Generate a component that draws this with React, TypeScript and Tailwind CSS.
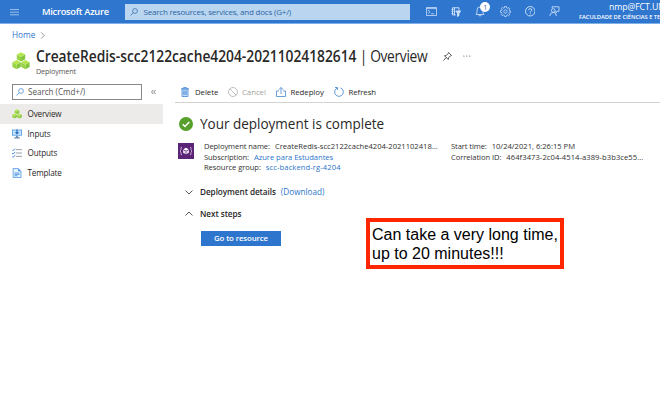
import React from "react";

type IconProps = { className?: string };

const Cubes = ({ className }: IconProps) => (
  <svg viewBox="0 0 18 18" className={className}>
    {[
      [4.8, 0.3],
      [0.4, 8],
      [9.2, 8],
    ].map(([x, y]) => (
      <g key={`${x}-${y}`} transform={`translate(${x} ${y})`}>
        <path d="M4.2 0 8.4 2.3 4.2 4.7 0 2.3Z" fill="#b4e64e" />
        <path d="M0 2.3 4.2 4.7V9.2L0 6.9Z" fill="#98d344" />
        <path d="M8.4 2.3 4.2 4.7V9.2L8.4 6.9Z" fill="#83c63a" />
      </g>
    ))}
  </svg>
);

const Magnifier = ({ className }: IconProps) => (
  <svg viewBox="0 0 16 16" fill="none" stroke="currentColor" strokeWidth="1.4" className={className}>
    <circle cx="10" cy="6" r="4.8" />
    <path d="M6.5 9.5 1 15" />
  </svg>
);

const Chevron = ({ className }: IconProps) => (
  <svg viewBox="0 0 16 16" fill="none" stroke="currentColor" strokeWidth="1.8" className={className}>
    <path d="M1 5 8 12 15 5" />
  </svg>
);

function TopBar() {
  return (
    <header className="flex h-[24px] shrink-0 items-center border-b border-[#7db0e6] bg-[#2f76cf] text-white">
      <svg viewBox="0 0 10 8" className="ml-[10px] h-[8px] w-[9px]" stroke="#c4dcf5" strokeWidth="0.8">
        <path d="M0 1.3H10M0 4.2H10M0 7.1H10" />
      </svg>
      <span className="ml-[23px] w-[83px] text-[9.3px] font-semibold tracking-[-0.28px]">Microsoft Azure</span>
      <div className="flex h-[16px] w-[285px] items-center bg-[#b9d5ef] text-[#2c65a5]">
        <Magnifier className="ml-[5px] h-[8px] w-[8px]" />
        <span className="ml-[5.5px] text-[8px] tracking-[-0.2px]">Search resources, services, and docs (G+/)</span>
      </div>
      <div className="ml-[16px] flex w-[134px] items-center justify-between text-[#d5e6f8]">
        <svg viewBox="0 0 22 18" fill="none" stroke="currentColor" strokeWidth="1.5" className="h-[9px] w-[11px]">
          <path d="M1 1H21V17H1ZM1 3.2H21M4 6 8 9.5 4 13M10 13.5H16" />
        </svg>
        <svg viewBox="0 0 20 20" fill="none" stroke="currentColor" strokeWidth="1.8" className="h-[10px] w-[10px]">
          <path d="M9.5 16H3V1.5H16V7M7 1.5V16M1 5H5M1 9H5M1 13H5" />
          <path d="M9.5 8H19.5L16 12.5V17L13 19V12.5Z" fill="#c9def6" />
        </svg>
        <div className="relative">
          <svg viewBox="0 0 20 22" fill="none" stroke="currentColor" strokeWidth="1.6" className="h-[11px] w-[10px]">
            <path d="M2 17H18L16 14V8A6 6 0 0 0 4 8V14ZM8 17V19Q10 21 12 19V17" />
          </svg>
          <span className="absolute -top-[4px] left-[5px] flex h-[10px] w-[10px] items-center justify-center rounded-full bg-white text-[7px] leading-none text-[#2f5f9e]">
            1
          </span>
        </div>
        <svg viewBox="0 0 20 20" fill="none" stroke="currentColor" strokeWidth="1.4" className="h-[11px] w-[11px]">
          <path d="M8.3 1H11.7L12.2 3.6 14 4.4 16.2 2.9 18 5 16.4 7.2 17 8.7 19.3 9.2V11.6L16.9 12.1 16.2 13.8 17.5 16 15.5 17.7 13.5 16.3 12 17 11.5 19.2H8.5L8 17 6.3 16.2 4.2 17.6 2.3 15.6 3.7 13.5 3 11.9.8 11.5V8.6L3.1 8.1 3.8 6.4 2.5 4.4 4.5 2.5 6.5 3.9 8 3.3Z" />
          <circle cx="10" cy="10.1" r="3" />
        </svg>
        <svg viewBox="0 0 20 20" fill="none" stroke="currentColor" strokeWidth="1.7" className="h-[10.5px] w-[10.5px]">
          <circle cx="10" cy="10" r="9" />
          <path d="M7 8Q7 5 10 5T13 7.7Q13 9 11.3 10.1T10 12.5M10 14V16" />
        </svg>
        <svg viewBox="0 0 20 20" fill="none" stroke="currentColor" strokeWidth="1.6" className="h-[10.5px] w-[10.5px]">
          <path d="M6 4V1.5H19V10H16L13.5 13V10H12" />
          <circle cx="8" cy="8.5" r="3.5" />
          <path d="M1.5 19Q2 12.5 8 12.3T14 19" />
        </svg>
      </div>
      <div className="ml-[19px] flex w-[81px] flex-col overflow-hidden pt-px whitespace-nowrap">
        <span className="pl-[30px] text-[8.7px] leading-[11px] tracking-[-0.07px]">nmp@FCT.UNL.PT</span>
        <span className="text-[5.8px] leading-[9px] font-semibold tracking-[-0.05px]">FACULDADE DE CIÊNCIAS E TECNOLOGIA</span>
      </div>
    </header>
  );
}

function PageTitle() {
  return (
    <div>
      <div className="flex h-[22.5px] items-center pl-[12px] text-[8.3px] text-[#3079d1]">
        Home
        <Chevron className="ml-[4px] h-[7px] w-[7px] -rotate-90 text-[#777]" />
      </div>
      <div className="flex h-[34px] items-start pl-[12px]">
        <Cubes className="mt-[5px] h-[18px] w-[18px]" />
        <div className="ml-[6px] w-[407px] whitespace-nowrap">
          <h1 className="h-[19px] w-[450px] origin-left scale-x-[0.89] text-[15.5px] leading-[18px] text-[#292827]">
            <span className="font-semibold tracking-[-0.02px]">CreateRedis-scc2122cache4204-20211024182614</span>
            <span className="tracking-[-0.38px]"> | Overview</span>
          </h1>
          <p className="text-[7.2px] leading-[10px] tracking-[-0.1px] text-[#555]">Deployment</p>
        </div>
        <svg viewBox="0 0 18 18" fill="none" stroke="#333" strokeWidth="1.6" className="mt-[5px] h-[9px] w-[9px]">
          <path d="M11 1 17 7 14.5 8 11 11.5 10.5 15 3 7.5 6.5 7 10 3.5ZM6.5 11 1 17" />
        </svg>
        <svg viewBox="0 0 9 2" fill="#555" className="mt-[8px] ml-[11px] h-[2px] w-[8px]">
          <circle cx="1" cy="1" r=".7" />
          <circle cx="4.3" cy="1" r=".7" />
          <circle cx="7.6" cy="1" r=".7" />
        </svg>
      </div>
    </div>
  );
}

function InputsIcon() {
  return (
    <svg viewBox="0 0 18 18" className="h-[10px] w-[10px]">
      <path d="M0 1H18V12H0Z" fill="#5b9ee4" />
      <path d="M1.5 2.5H16.5V10.5H1.5Z" fill="#c3e2fb" />
      <path d="M7 12H11V15H14V17H4V15H7Z" fill="#6f8fb0" />
      <path d="M8 1H10V6H13L9 10 5 6H8Z" fill="#1c64bd" />
    </svg>
  );
}

function OutputsIcon() {
  return (
    <svg viewBox="0 0 18 18" fill="none" strokeWidth="1.6" className="h-[10px] w-[10px]">
      <path d="M0 3 2 5 5.5 1M0 9 2 11 5.5 7M0 15 2 17 5.5 13" stroke="#3c83d8" />
      <path d="M7 3H18M7 9H18M7 15H18" stroke="#8b949e" />
    </svg>
  );
}

function TemplateIcon() {
  return (
    <svg viewBox="0 0 18 18" className="h-[10px] w-[10px]">
      <path d="M2 .8H11L16.2 6V17.2H2Z" fill="#e5f3ff" stroke="#438be0" strokeWidth="1.3" />
      <path d="M11 .8V6H16.2Z" fill="#438be0" />
      <path d="M4.5 9H13.5M4.5 11.5H13.5M4.5 14H10" stroke="#3484db" strokeWidth="1.4" />
    </svg>
  );
}

function Sidebar() {
  const items = [
    { label: "Overview", icon: <Cubes className="h-[10px] w-[10px]" />, active: true },
    { label: "Inputs", icon: <InputsIcon /> },
    { label: "Outputs", icon: <OutputsIcon /> },
    { label: "Template", icon: <TemplateIcon /> },
  ];
  return (
    <aside className="w-[163px] shrink-0 text-[8.1px] tracking-[-0.15px] text-[#292827]">
      <div className="flex h-[23.5px] items-start pt-[3.5px] pl-[12px]">
        <div className="flex h-[15.5px] w-[130px] items-center border border-[#8a8886] text-[#555]">
          <Magnifier className="ml-[3px] h-[8px] w-[8px] text-[#3d80cd]" />
          <span className="ml-[4px] tracking-[-0.03px]">Search (Cmd+/)</span>
        </div>
        <svg viewBox="0 0 10 10" fill="none" stroke="#555" strokeWidth="1.4" className="mt-[5px] ml-[9px] h-[6px] w-[5px]">
          <path d="M4.5 1 1 5 4.5 9M9 1 5.5 5 9 9" />
        </svg>
      </div>
      <nav>
        {items.map((item) => (
          <div
            key={item.label}
            className={`flex h-[19.75px] items-center pl-[12px] ${item.active ? "bg-[#edebe9]" : ""}`}
          >
            {item.icon}
            <span className="ml-[5.5px]">{item.label}</span>
          </div>
        ))}
      </nav>
    </aside>
  );
}

function Toolbar() {
  return (
    <div className="flex h-[22.5px] items-center border-b border-[#d4d3d2] pt-[3px] pl-[6px] text-[7.8px] tracking-[-0.05px] text-[#292827]">
      <svg viewBox="0 0 16 20" className="-mt-px h-[10px] w-[8px]" fill="none" stroke="#3b80d1" strokeWidth="1.5">
        <path d="M2 4H14V19H2Z" fill="#c9e2fb" />
        <path d="M0 3.5H16M5 3V1H11V3M5.5 7V16M8 7V16M10.5 7V16" />
      </svg>
      <span className="ml-[6px] w-[32.5px]">Delete</span>
      <svg viewBox="0 0 20 20" className="-mt-px h-[10px] w-[10px]" fill="none" stroke="#aaa" strokeWidth="1.5">
        <circle cx="10" cy="10" r="9" />
        <path d="M3.6 3.6 16.4 16.4" />
      </svg>
      <span className="ml-[4.5px] w-[34px] text-[#a19f9d]">Cancel</span>
      <svg viewBox="0 0 20 20" className="-mt-px h-[10px] w-[10px]" fill="none" stroke="#3b80d1" strokeWidth="1.5">
        <path d="M6 8H1V19H19V8H14M10 14V1M5.5 5.5 10 1 14.5 5.5" />
      </svg>
      <span className="ml-[4.5px] w-[43px]">Redeploy</span>
      <svg viewBox="0 0 20 20" className="-mt-px h-[10px] w-[10px]" fill="none" stroke="#3b80d1" strokeWidth="1.6">
        <path d="M13 1.8A8.7 8.7 0 1 1 6 2.2M2 1H7V6" />
      </svg>
      <span className="ml-[5px]">Refresh</span>
    </div>
  );
}

function Details() {
  return (
    <div className="flex text-[7.6px] leading-[10.6px] whitespace-nowrap text-[#323130]">
      <svg viewBox="0 0 32 32" className="mt-[2px] ml-[3px] h-[16px] w-[16px]">
        <path d="M0 0H32V32H0Z" fill="#5b2476" />
        <path d="M8 9H6V14L4 16 6 18V23H8M24 9H26V14L28 16 26 18V23H24" fill="none" stroke="#d8c6e1" strokeWidth="1.5" />
        <path d="M16 9.5 21.5 12.5 16 15.5 10.5 12.5Z" fill="#fff" />
        <path d="M10 13.8 15.4 16.7V22.7L10 19.5ZM22 13.8 16.6 16.7V22.7L22 19.5Z" fill="#e5daec" />
      </svg>
      <div className="ml-[10px] w-[247px]">
        <p>
          <span className="tracking-[-0.1px]">Deployment name:</span>
          <span className="ml-[5px]">CreateRedis-scc2122cache4204-2021102418...</span>
        </p>
        <p>
          <span className="tracking-[-0.1px]">Subscription:</span>
          <span className="ml-[5px] tracking-[-0.03px] text-[#2b75c9]">Azure para Estudantes</span>
        </p>
        <p>
          <span className="tracking-[-0.07px]">Resource group:</span>
          <span className="ml-[5px] tracking-[0.1px] text-[#2b75c9]">scc-backend-rg-4204</span>
        </p>
      </div>
      <div>
        <p>
          <span className="tracking-[-0.1px]">Start time:</span>
          <span className="ml-[5px]">10/24/2021, 6:26:15 PM</span>
        </p>
        <p>
          <span className="tracking-[-0.07px]">Correlation ID:</span>
          <span className="ml-[5px] tracking-[0.07px]">464f3473-2c04-4514-a389-b3b3ce55...</span>
        </p>
      </div>
    </div>
  );
}

export default function App() {
  return (
    <div className="flex h-[402px] w-[660px] flex-col overflow-hidden bg-white font-['Open_Sans','Noto_Sans',sans-serif]">
      <TopBar />
      <PageTitle />
      <div className="flex">
        <Sidebar />
        <main className="ml-[12px] flex-1">
          <Toolbar />
          <div className="mt-[11px] mb-[7px] flex h-[20px] items-center pl-[4px]">
            <svg viewBox="0 0 28 28" className="h-[14px] w-[14px]">
              <circle cx="14" cy="14" r="14" fill="#57a02c" />
              <path d="M7.5 14.5 12 19 20.5 10" fill="none" stroke="#fff" strokeWidth="3" />
            </svg>
            <h2 className="-mt-[2px] ml-[7px] origin-left scale-x-[0.9] text-[15px] text-[#292827]">
              Your deployment is complete
            </h2>
          </div>
          <Details />
          <div className="mt-[8px] flex h-[22px] items-center pl-[10px] text-[8.2px] text-[#292827]">
            <Chevron className="h-[8px] w-[8px] text-[#444]" />
            <span className="ml-[7px] font-semibold tracking-[-0.06px]">Deployment details</span>
            <span className="ml-[5px] text-[#2b75c9]">(Download)</span>
          </div>
          <div className="flex h-[22px] items-center pl-[10px] text-[8.2px] text-[#292827]">
            <Chevron className="h-[8px] w-[8px] rotate-180 text-[#444]" />
            <span className="ml-[7px] font-semibold tracking-[-0.06px]">Next steps</span>
          </div>
          <div className="flex items-start">
            <button className="mt-[6px] ml-[26px] h-[15px] w-[80px] bg-[#2e76cd] text-[7.8px] leading-[14px] font-semibold tracking-[-0.1px] text-white">
              Go to resource
            </button>
            <aside className="-mt-[6.5px] ml-[85px] h-[51px] w-[198px] border-4 border-[#ff2600] bg-white pt-[3px] pl-[2px] font-['Liberation_Sans',Arial,sans-serif] text-[16px] leading-[19px] whitespace-nowrap text-black">
              Can take a very long time,
              <br />
              up to 20 minutes!!!
            </aside>
          </div>
        </main>
      </div>
    </div>
  );
}
